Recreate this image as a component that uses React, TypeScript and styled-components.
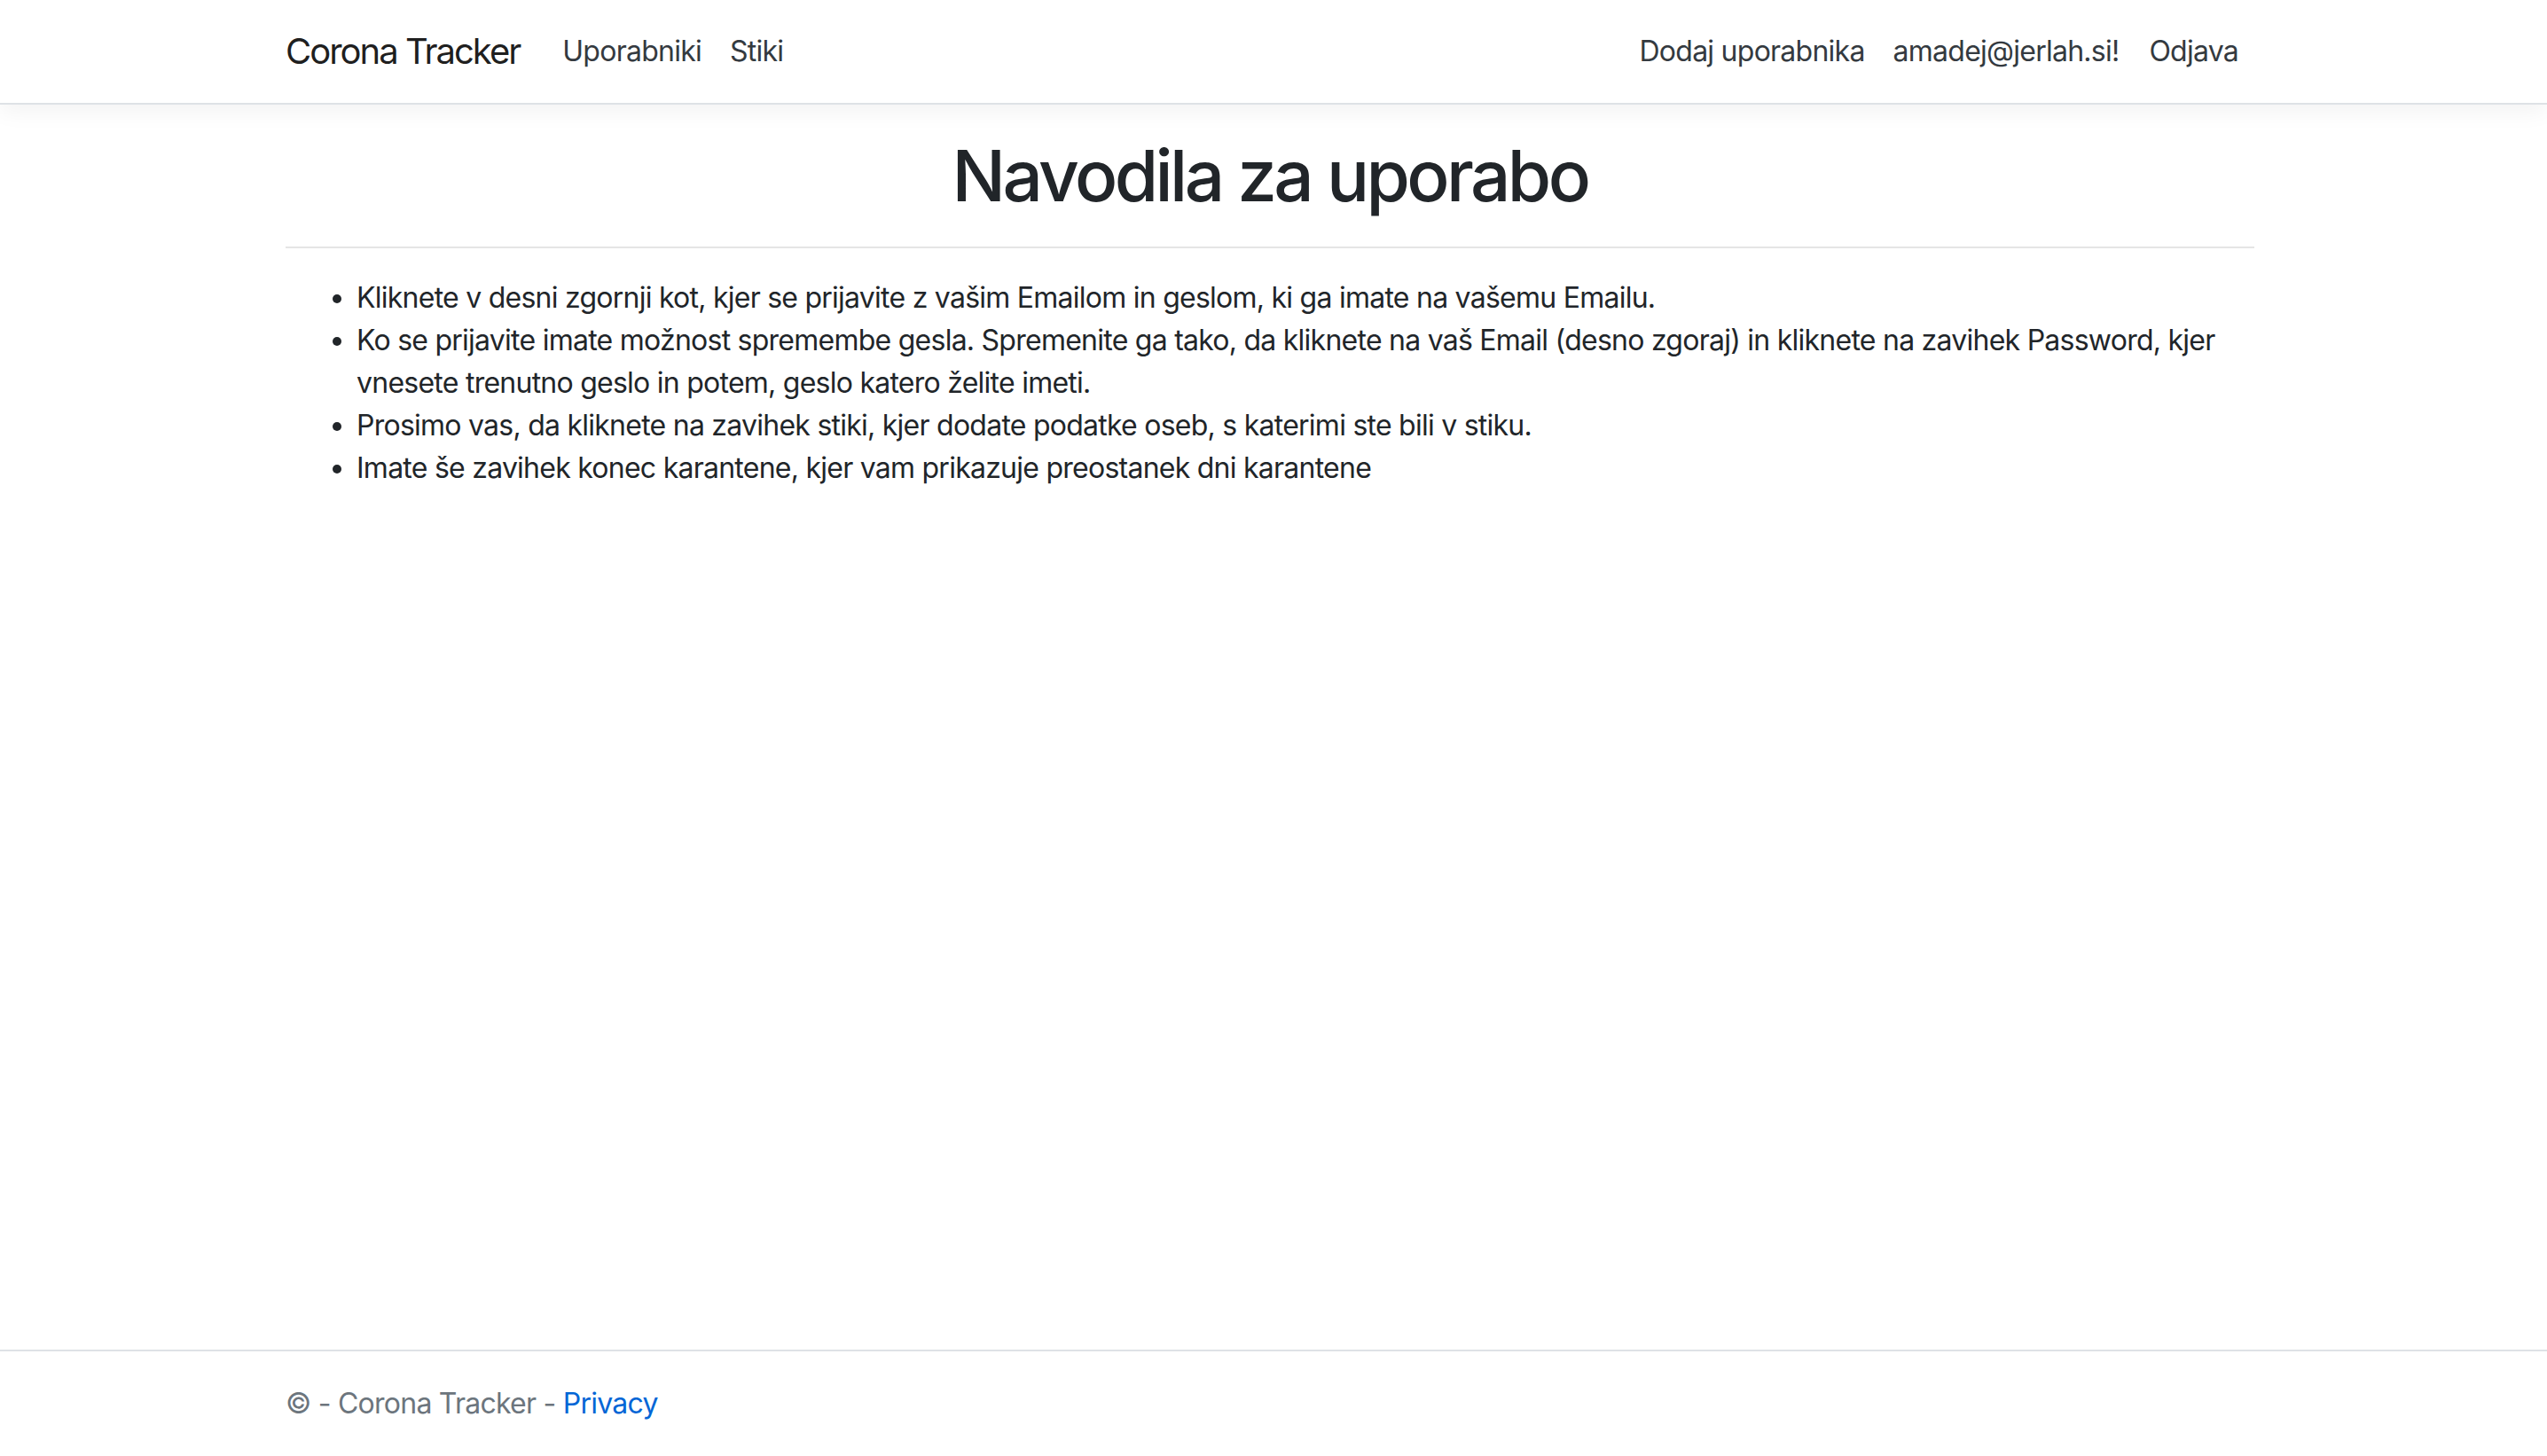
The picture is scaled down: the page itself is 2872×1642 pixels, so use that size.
import React from "react";
import styled, { createGlobalStyle } from "styled-components";

const GlobalStyle = createGlobalStyle`
  html, body { margin: 0; padding: 0; }
  body {
    font-family: Inter, "Noto Sans", "Liberation Sans", sans-serif;
    font-size: 32px;
    line-height: 1.5;
    letter-spacing: -0.75px;
    color: #212529;
    background: #fff;
    overflow: hidden;
  }
  * { box-sizing: border-box; }
`;

const Page = styled.div`
  height: 100vh;
  display: flex;
  flex-direction: column;
`;

const Navbar = styled.header`
  background: #fff;
  border-bottom: 2px solid #dee2e6;
  box-shadow: 0 8px 24px rgba(0, 0, 0, 0.05);
  padding: 16px 32px;
  margin-bottom: 32px;
`;

const Container = styled.div`
  width: 2280px;
  max-width: 100%;
  margin: 0 auto;
  padding: 0 34px 0 26px;
`;

const NavInner = styled(Container)`
  display: flex;
  align-items: center;
`;

const Brand = styled.a`
  font-size: 40px;
  line-height: 60px;
  letter-spacing: -2px;
  padding: 10px 0;
  margin-right: 32px;
  color: rgba(0, 0, 0, 0.9);
  text-decoration: none;
  white-space: nowrap;
`;

const NavList = styled.ul<{ $grow?: boolean }>`
  display: flex;
  align-items: center;
  list-style: none;
  margin: 0;
  padding: 0;
  flex-grow: ${(p) => (p.$grow ? 1 : 0)};
`;

const NavLink = styled.a`
  display: block;
  padding: 16px;
  color: #343a40;
  text-decoration: none;
  white-space: nowrap;
`;

const NavButton = styled.button`
  display: block;
  padding: 16px;
  border: 2px solid transparent;
  background: none;
  font: inherit;
  letter-spacing: inherit;
  line-height: 1.5;
  color: #343a40;
  cursor: pointer;
`;

const Main = styled.main`
  padding-bottom: 32px;
`;

const Heading = styled.h1`
  text-align: center;
  font-size: 80px;
  font-weight: 500;
  line-height: 1.2;
  letter-spacing: -3.6px;
  margin: 0 0 16px;
`;

const Rule = styled.hr`
  border: 0;
  border-top: 2px solid rgba(0, 0, 0, 0.1);
  margin: 32px 0;
`;

const List = styled.ul`
  margin: 0 0 32px;
  padding-left: 80px;
`;

const Footer = styled.footer`
  margin-top: auto;
  border-top: 2px solid #dee2e6;
  color: #6c757d;
  line-height: 118px;
  white-space: nowrap;
`;

const FooterLink = styled.a`
  color: #0366d6;
  text-decoration: none;
`;

const items = [
  "Kliknete v desni zgornji kot, kjer se prijavite z vašim Emailom in geslom, ki ga imate na vašemu Emailu.",
  "Ko se prijavite imate možnost spremembe gesla. Spremenite ga tako, da kliknete na vaš Email (desno zgoraj) in kliknete na zavihek Password, kjer vnesete trenutno geslo in potem, geslo katero želite imeti.",
  "Prosimo vas, da kliknete na zavihek stiki, kjer dodate podatke oseb, s katerimi ste bili v stiku.",
  "Imate še zavihek konec karantene, kjer vam prikazuje preostanek dni karantene",
];

export default function App() {
  return (
    <>
      <GlobalStyle />
      <Page>
        <Navbar>
          <NavInner>
            <Brand href="#">Corona Tracker</Brand>
            <NavList $grow>
              <li><NavLink href="#">Uporabniki</NavLink></li>
              <li><NavLink href="#">Stiki</NavLink></li>
            </NavList>
            <NavList>
              <li><NavLink href="#">Dodaj uporabnika</NavLink></li>
              <li><NavLink href="#">amadej@jerlah.si!</NavLink></li>
              <li><NavButton type="button">Odjava</NavButton></li>
            </NavList>
          </NavInner>
        </Navbar>
        <Container>
          <Main>
            <Heading>Navodila za uporabo</Heading>
            <Rule />
            <List>
              {items.map((t) => (
                <li key={t}>{t}</li>
              ))}
            </List>
          </Main>
        </Container>
        <Footer>
          <Container>
            © - Corona Tracker - <FooterLink href="#">Privacy</FooterLink>
          </Container>
        </Footer>
      </Page>
    </>
  );
}
